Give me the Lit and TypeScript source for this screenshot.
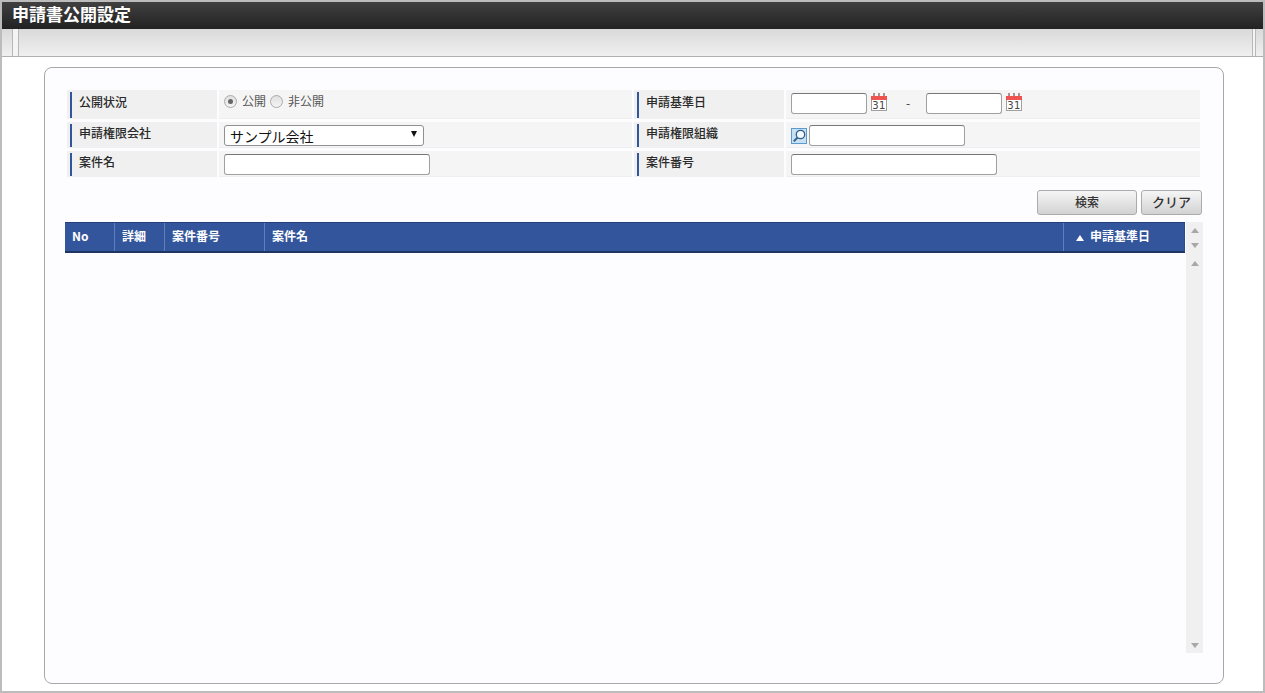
import { LitElement, html, css } from "lit";
import { customElement } from "lit/decorators.js";

const calendar = html`<svg class="cal" width="17" height="18" viewBox="0 0 17 18">
  <rect x="0.5" y="6.5" width="15" height="11" fill="#fff" stroke="#a0a0a0"/>
  <rect x="0" y="3" width="16" height="4" fill="#ef5350"/>
  <rect x="2" y="0" width="2" height="3" fill="#b09090"/><rect x="7" y="0" width="2" height="3" fill="#b09090"/><rect x="12" y="0" width="2" height="3" fill="#b09090"/>
  <text x="8" y="16" text-anchor="middle" class="calt">31</text>
</svg>`;

const search = html`<svg class="srch" width="16" height="16" viewBox="0 0 16 16">
  <rect x="0.5" y="0.5" width="15" height="15" fill="#c8e0f2" stroke="#5a9bd0"/>
  <circle cx="9.5" cy="6.5" r="4.2" fill="#f4f9fd" stroke="#2c5f8c" stroke-width="1.3"/>
  <path d="M6.4 9.6 L2.8 13.4" stroke="#2c5f8c" stroke-width="2"/>
</svg>`;

@customElement("app-root")
export class AppRoot extends LitElement {
  static styles = css`
    :host {
      display: block;
      height: 693px;
      box-sizing: border-box;
      border: 2px solid #bcbcbc;
      background: #fff;
      font-family: "Noto Sans CJK JP", "Liberation Sans", sans-serif;
      font-size: 12px;
      color: #333;
      overflow: hidden;
    }
    .title {
      height: 27px;
      box-sizing: border-box;
      background: linear-gradient(#404040, #222);
      color: #fff;
      font-size: 17px;
      font-weight: 700;
      line-height: 24px;
      padding-left: 10px;
    }
    .toolbar {
      height: 28px;
      box-sizing: border-box;
      background: linear-gradient(#d9d9d9, #f0f0f0);
      border-bottom: 1px solid #b0b0b0;
      display: flex;
      justify-content: space-between;
      padding: 0 7px 0 10px;
    }
    .rules {
      box-sizing: border-box;
      border-left: 1px solid #b8b8b8;
      border-right: 1px solid #b8b8b8;
      background: #f4f4f4;
    }
    .rules.l { width: 7px; }
    .rules.r { width: 4px; }
    .panel {
      margin: 10px 39px 0 42px;
      height: 617px;
      box-sizing: border-box;
      border: 1px solid #a8a8a8;
      border-radius: 8px;
      background: #fdfdff;
      padding: 22px 21px 0 20px;
    }
    .form {
      display: grid;
      grid-template-columns: 150px 413px 150px 1fr;
      grid-template-rows: 29px 26px 26px;
      row-gap: 3px;
      column-gap: 2px;
      margin: 0 2px;
    }
    .lab {
      background: #f0f0f0;
      position: relative;
      padding: 3px 0 0 12px;
      font-weight: 500;
      line-height: 16px;
      color: #2a2a2a;
    }
    .lab.first { padding-top: 4px; }
    .lab::before {
      content: "";
      position: absolute;
      left: 3px;
      top: 2px;
      bottom: 1px;
      width: 2px;
      background: #33559b;
    }
    .val {
      background: #f5f5f5;
      display: flex;
      align-items: flex-start;
      padding: 3px 0 0 5px;
      border-bottom: 1px solid #eee;
    }
    input.txt {
      height: 21px;
      box-sizing: border-box;
      border: 1px solid #a0a0a0;
      border-top-color: #777;
      border-radius: 3px;
      background: #fff;
      padding: 0;
      margin: 0;
    }
    .w76 { width: 76px; }
    .w156 { width: 156px; }
    .w206 { width: 206px; }
    .radio {
      width: 13px;
      height: 13px;
      margin-top: 2px;
      box-sizing: border-box;
      border-radius: 50%;
      border: 1px solid #aaa;
      background: linear-gradient(#e0e0e0, #f4f4f4);
      display: inline-flex;
      align-items: center;
      justify-content: center;
      flex: none;
    }
    .radio.on::after {
      content: "";
      width: 5px;
      height: 5px;
      border-radius: 50%;
      background: #666;
    }
    .rtext { color: #555; line-height: 16px; margin-left: 5px; margin-right: 4px; }
    .sel {
      width: 200px;
      height: 21px;
      box-sizing: border-box;
      border: 1px solid #909090;
      border-radius: 3px;
      background: #fff;
      display: flex;
      justify-content: space-between;
      align-items: center;
      padding: 0 6px 0 5px;
      font-size: 14px;
      color: #111;
    }
    .sel .arrow {
      width: 0;
      height: 0;
      border-left: 3px solid transparent;
      border-right: 3px solid transparent;
      border-top: 6px solid #111;
      margin-top: -3px;
    }
    .cal { margin-left: 4px; flex: none; }
    .calt { font: 400 10px "DejaVu Sans", sans-serif; fill: #444; letter-spacing: 0.4px; }
    .srch { flex: none; margin: 3px 2px 0 0; }
    .dash { width: 38px; padding-left: 2px; box-sizing: border-box; text-align: center; color: #333; line-height: 20px; }
    .buttons {
      display: flex;
      justify-content: flex-end;
      gap: 4px;
      margin-top: 13px;
      height: 25px;
    }
    .btn {
      height: 25px;
      box-sizing: border-box;
      border: 1px solid #ababab;
      border-radius: 3px;
      background: linear-gradient(#f6f6f6, #d2d2d2);
      font-family: "Noto Sans CJK JP", sans-serif;
      font-weight: 500;
      color: #333;
      display: flex;
      align-items: center;
      justify-content: center;
      padding-bottom: 2px;
    }
    .b1 { width: 100px; font-size: 12px; }
    .b2 { width: 61px; font-size: 13px; }
    .tablewrap {
      display: flex;
      margin: 7px -1px 0 0;
    }
    .table { flex: 1; min-width: 0; }
    .thead {
      height: 31px;
      box-sizing: border-box;
      background: #33559b;
      border-top: 1px solid #243f7a;
      border-bottom: 2px solid #1f3566;
      border-right: 1px solid #2a4a8c;
      display: flex;
      color: #fff;
      font-weight: 700;
      line-height: 26px;
    }
    .th {
      box-sizing: border-box;
      padding-left: 7px;
      border-right: 1px solid #5f7fc0;
    }
    .c1 { width: 50px; }
    .c2 { width: 50px; }
    .c3 { width: 100px; }
    .c4 { flex: 1; }
    .c5 { width: 120px; border-right: 0; padding-left: 12px; }
    .c5 .up {
      display: inline-block;
      width: 0;
      height: 0;
      border-left: 4px solid transparent;
      border-right: 4px solid transparent;
      border-bottom: 6px solid #fff;
      margin-right: 6px;
    }
    .sb {
      width: 17px;
      height: 431px;
      margin-left: 1px;
      background: #f0f0f0;
      display: flex;
      flex-direction: column;
      align-items: center;
      padding-top: 6px;
      box-sizing: border-box;
      flex: none;
    }
    .tri {
      width: 0;
      height: 0;
      border-left: 4px solid transparent;
      border-right: 4px solid transparent;
    }
    .tri.u { border-bottom: 5px solid #a8a8a8; }
    .tri.d { border-top: 5px solid #a8a8a8; }
    .s1 { margin-top: 10px; }
    .s2 { margin-top: 13px; }
    .s3 { margin-top: 377px; }
  `;

  render() {
    return html`
      <div class="title">申請書公開設定</div>
      <div class="toolbar"><div class="rules l"></div><div class="rules r"></div></div>
      <div class="panel">
        <div class="form">
          <div class="lab first">公開状況</div>
          <div class="val">
            <span class="radio on"></span><span class="rtext">公開</span>
            <span class="radio"></span><span class="rtext">非公開</span>
          </div>
          <div class="lab first">申請基準日</div>
          <div class="val">
            <input class="txt w76" />${calendar}<span class="dash">-</span><input class="txt w76" />${calendar}
          </div>
          <div class="lab">申請権限会社</div>
          <div class="val"><div class="sel"><span>サンプル会社</span><span class="arrow"></span></div></div>
          <div class="lab">申請権限組織</div>
          <div class="val">${search}<input class="txt w156" /></div>
          <div class="lab">案件名</div>
          <div class="val"><input class="txt w206" /></div>
          <div class="lab">案件番号</div>
          <div class="val"><input class="txt w206" /></div>
        </div>
        <div class="buttons">
          <div class="btn b1">検索</div>
          <div class="btn b2">クリア</div>
        </div>
        <div class="tablewrap">
          <div class="table">
            <div class="thead">
              <div class="th c1">No</div>
              <div class="th c2">詳細</div>
              <div class="th c3">案件番号</div>
              <div class="th c4">案件名</div>
              <div class="th c5"><span class="up"></span>申請基準日</div>
            </div>
          </div>
          <div class="sb">
            <span class="tri u"></span>
            <span class="tri d s1"></span>
            <span class="tri u s2"></span>
            <span class="tri d s3"></span>
          </div>
        </div>
      </div>
    `;
  }
}
